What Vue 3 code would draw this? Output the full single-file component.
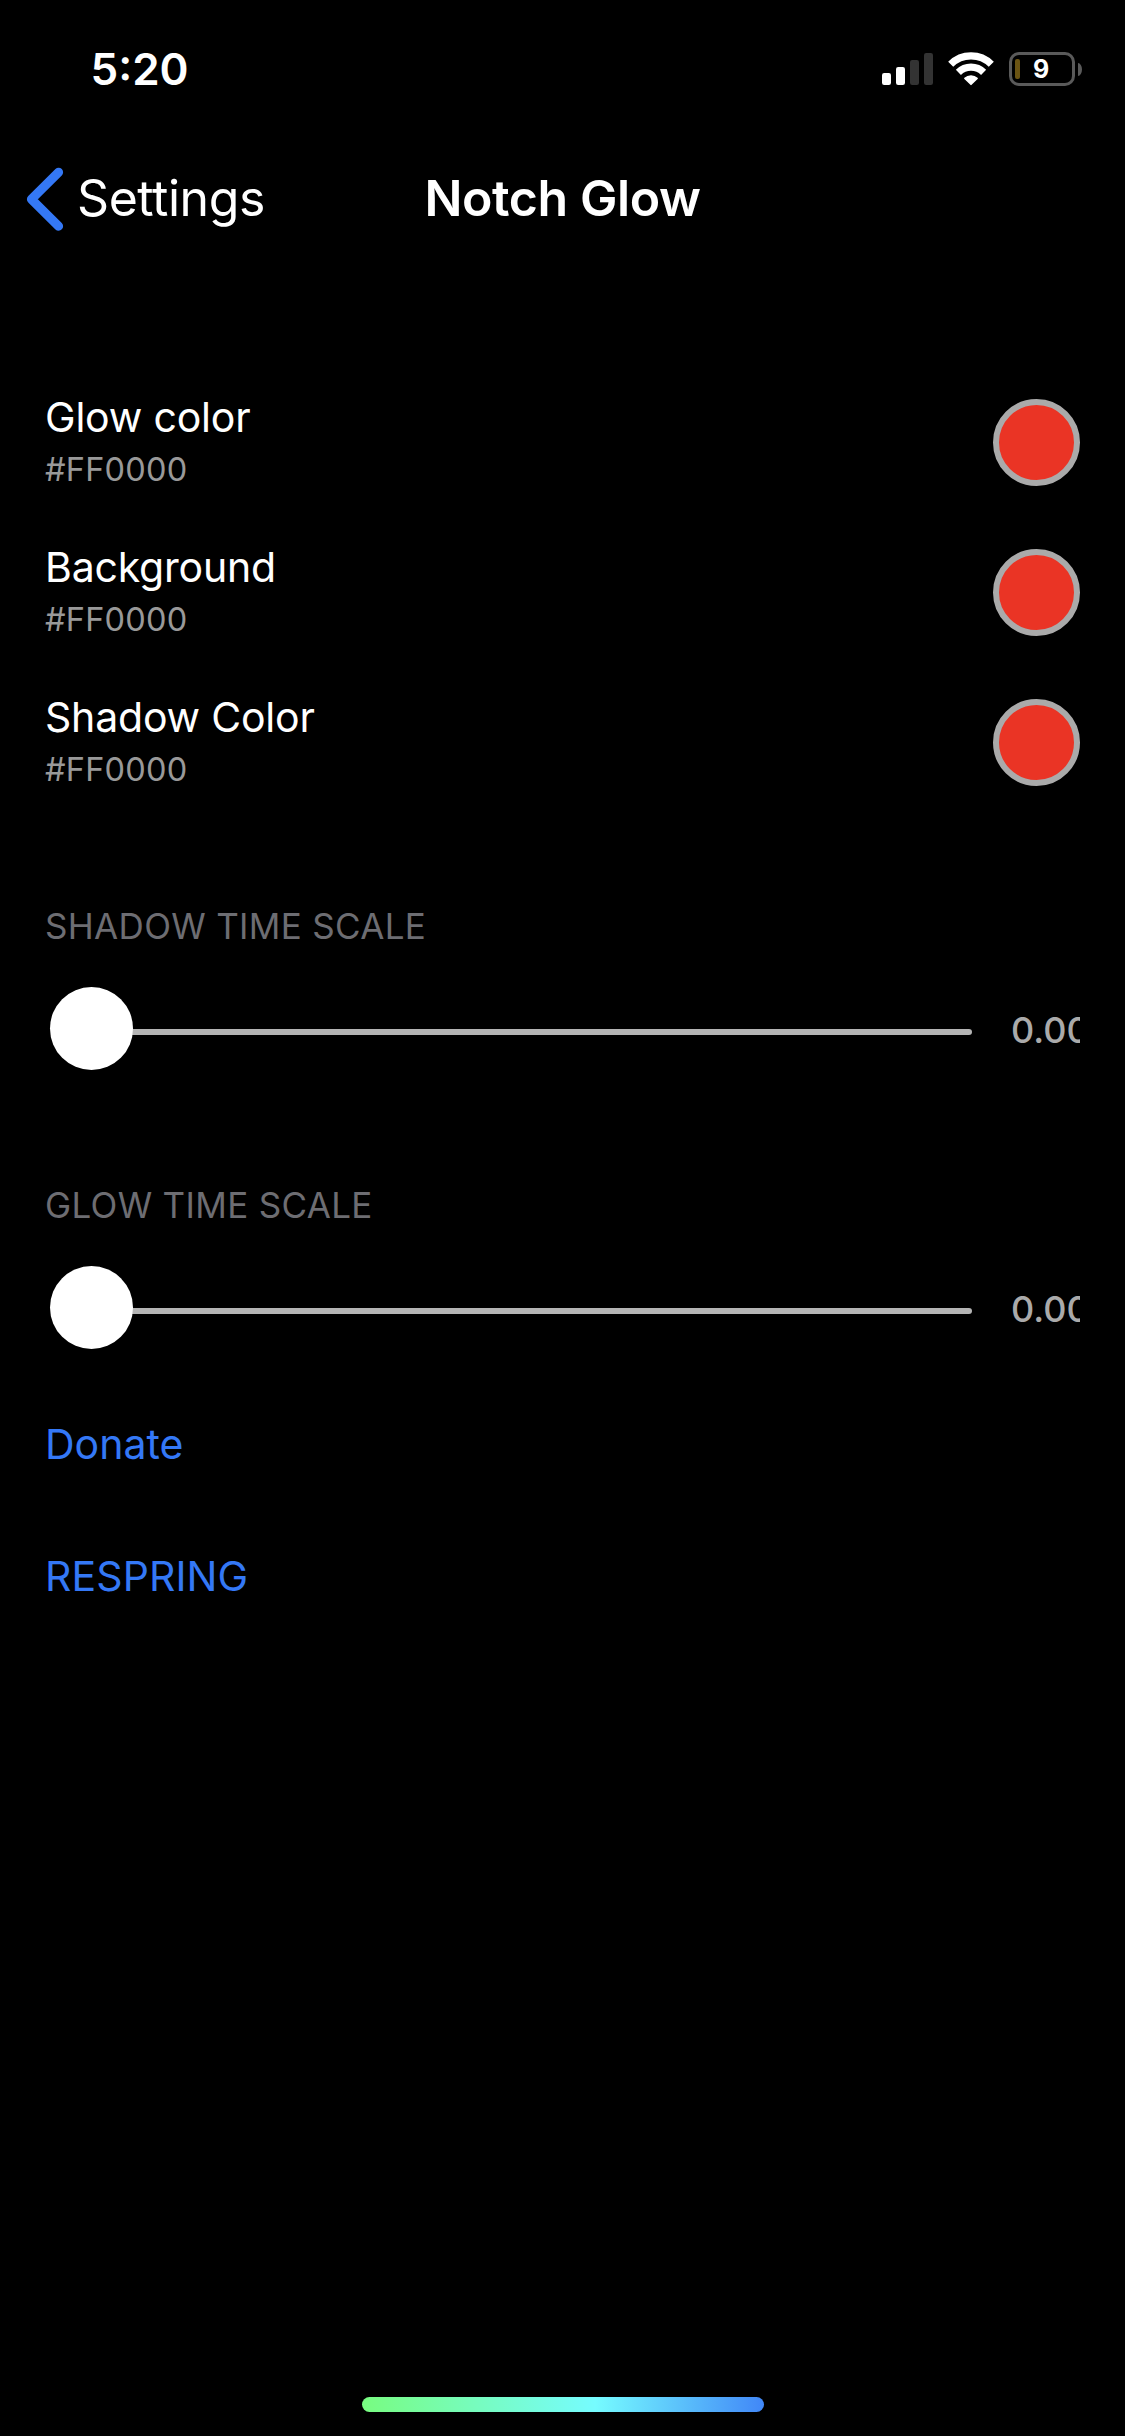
<script setup>
const colors = [
  { label: 'Glow color', value: '#FF0000' },
  { label: 'Background', value: '#FF0000' },
  { label: 'Shadow Color', value: '#FF0000' },
]
const sliders = [
  { label: 'SHADOW TIME SCALE', value: '0.00' },
  { label: 'GLOW TIME SCALE', value: '0.00' },
]
</script>

<template>
  <div class="screen">
    <header class="status">
      <span class="time">5:20</span>
      <div class="indicators">
        <svg class="signal" width="51" height="32" viewBox="0 0 51 32">
          <rect x="0" y="20" width="9" height="12" rx="2.2" fill="#fff" />
          <rect x="14" y="14" width="9" height="18" rx="2.2" fill="#fff" />
          <rect x="28" y="7" width="9" height="25" rx="2.2" fill="#333" />
          <rect x="42" y="0" width="9" height="32" rx="2.2" fill="#333" />
        </svg>
        <svg class="wifi" width="48" height="34" viewBox="0 0 48 34">
          <g fill="none" stroke="#fff" stroke-width="7.2">
            <path d="M3.7 12.2A28.8 28.8 0 0 1 44.3 12.2" />
            <path d="M11.4 20.4A17.9 17.9 0 0 1 36.6 20.4" />
          </g>
          <path d="M18 26.4A8.8 8.8 0 0 1 30 26.4L24 32.2Z" fill="#fff" stroke="#fff" stroke-width="1.8" stroke-linejoin="round" />
        </svg>
        <div class="battery">
          <i class="level"></i>
          <span class="percent">9</span>
        </div>
        <i class="nub"></i>
      </div>
    </header>

    <nav class="nav">
      <a class="back-link">
        <svg class="chevron" width="38" height="64" viewBox="0 0 38 64">
          <path d="M32.6 5.2L5.4 32.2L32.6 59.2" fill="none" stroke="#3478f6" stroke-width="9" stroke-linecap="round" stroke-linejoin="round" />
        </svg>
        <span class="back-text">Settings</span>
      </a>
      <h1 class="title">Notch Glow</h1>
    </nav>

    <main class="list">
      <div v-for="c in colors" :key="c.label" class="color-row">
        <div class="texts">
          <span class="label">{{ c.label }}</span>
          <span class="hex">{{ c.value }}</span>
        </div>
        <i class="swatch"></i>
      </div>

      <section v-for="s in sliders" :key="s.label" class="group">
        <h2 class="group-title">{{ s.label }}</h2>
        <div class="slider-row">
          <div class="slider">
            <i class="thumb"></i>
            <i class="track"></i>
          </div>
          <span class="amount">{{ s.value }}</span>
        </div>
      </section>

      <a class="link donate">Donate</a>
      <a class="link respring">RESPRING</a>
    </main>

    <div class="home"></div>
  </div>
</template>

<style>
body {
  margin: 0;
  background: #000;
}
</style>

<style scoped>
.screen {
  display: flex;
  flex-direction: column;
  box-sizing: border-box;
  width: 1125px;
  height: 2436px;
  padding-bottom: 24px;
  overflow: hidden;
  background: #000;
  color: #fff;
  font-family: Inter, "Liberation Sans", sans-serif;
  white-space: nowrap;
}
i {
  display: block;
}
.status {
  display: flex;
  justify-content: space-between;
  height: 138px;
  padding: 0 43px 0 90.5px;
}
.time {
  font-size: 44px;
  font-weight: 600;
  line-height: 138px;
}
.indicators {
  display: flex;
  align-items: center;
}
.wifi {
  margin: 0 14px;
}
.battery {
  display: flex;
  align-items: center;
  box-sizing: border-box;
  width: 66px;
  height: 34px;
  padding-left: 3px;
  border: 3px solid #5a5a5a;
  border-radius: 10px;
}
.level {
  width: 5px;
  height: 20px;
  border-radius: 2px;
  background: #6b5413;
}
.percent {
  margin-left: 13px;
  font-size: 25px;
  font-weight: 700;
  line-height: 28px;
}
.nub {
  width: 4px;
  height: 13px;
  margin-left: 3px;
  border-radius: 0 4px 4px 0 / 0 6.5px 6.5px 0;
  background: #5a5a5a;
}
.nav {
  display: grid;
  grid-template-columns: 1fr auto 1fr;
  height: 120px;
  padding: 0 26px;
  line-height: 120px;
}
.back-link {
  display: flex;
  align-items: center;
  gap: 13px;
}
.chevron {
  margin-top: 1px;
}
.back-text {
  font-size: 50px;
  letter-spacing: -0.45px;
}
.title {
  margin: 0;
  font-size: 50px;
  font-weight: 600;
  letter-spacing: -0.4px;
}
.list {
  display: flex;
  flex-direction: column;
  padding: 109px 45px 0;
}
.color-row {
  display: flex;
  justify-content: space-between;
  box-sizing: border-box;
  height: 150px;
  padding-top: 25px;
}
.texts {
  display: flex;
  flex-direction: column;
}
.label {
  font-size: 41px;
  line-height: 50px;
  letter-spacing: -0.2px;
}
.hex {
  padding-top: 1px;
  color: #999;
  font-size: 32.5px;
  line-height: 54px;
  letter-spacing: 0.2px;
}
.swatch {
  box-sizing: border-box;
  width: 87px;
  height: 87px;
  margin-top: 7px;
  border: 6px solid #aaa;
  border-radius: 50%;
  background: #ea3425;
}
.group {
  height: 204px;
  margin-top: 75px;
}
.color-row + .group {
  margin-top: 82px;
}
.group-title {
  margin: 0;
  color: #6d6d72;
  font-size: 35px;
  font-weight: 400;
  line-height: 55px;
  letter-spacing: 0.32px;
}
.slider-row {
  display: flex;
  padding-top: 33px;
}
.slider {
  display: flex;
  align-items: center;
  width: 922px;
  height: 83px;
  margin-left: 5px;
}
.thumb {
  z-index: 1;
  width: 83px;
  height: 83px;
  border-radius: 50%;
  background: #fff;
}
.track {
  flex: 1;
  height: 6px;
  margin: 7px 0 0 -4px;
  border-radius: 0 3px 3px 0;
  background: #b4b4b4;
}
.amount {
  width: 69px;
  margin-left: 39px;
  overflow: hidden;
  color: #aaa;
  font-size: 36px;
  font-weight: 550;
  line-height: 87px;
}
.link {
  color: #3478f6;
  font-size: 41px;
}
.donate {
  line-height: 124px;
}
.respring {
  line-height: 141px;
  letter-spacing: 0.1px;
}
.home {
  width: 402px;
  height: 15px;
  margin: auto auto 0 362px;
  border-radius: 8px;
  background: linear-gradient(90deg, #78fc80, #76fcff 58%, #4187f7);
}
</style>
